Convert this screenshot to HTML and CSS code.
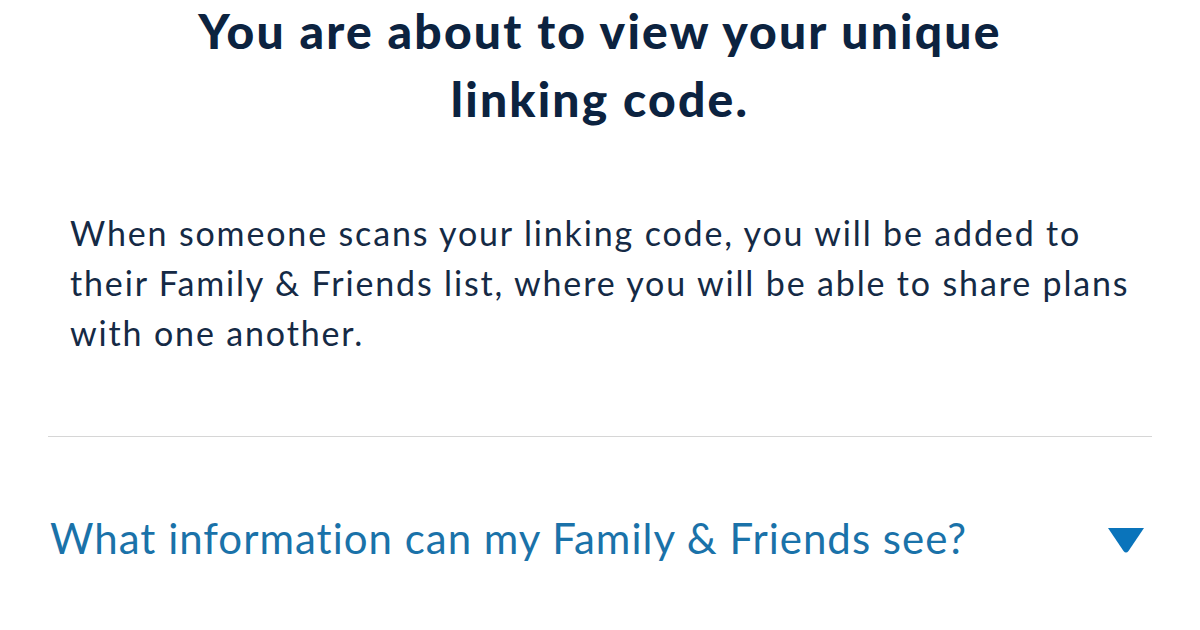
FILE: index.html
```html
<!DOCTYPE html>
<html lang="en">
<head>
<meta charset="utf-8">
<link rel="stylesheet" href="styles.css">
</head>
<body>
<main class="page">
  <h1 class="title">You are about to view your unique<br>linking code.</h1>
  <p class="intro">When someone scans your linking code, you will be added to their Family &amp; Friends list, where you will be able to share plans with one another.</p>
  <hr class="divider">
  <div class="faq">
    <span class="faq-q">What information can my Family &amp; Friends see?</span>
    <svg class="faq-caret" width="36" height="25" viewBox="0 0 36 25"><path d="M0 0 H36 L20.5 23 Q18 26 15.5 23 Z" fill="#0a74bb"/></svg>
  </div>
</main>
</body>
</html>
```
FILE: styles.css
```css
html, body { margin: 0; padding: 0; background: #fff; }
.page {
  width: 1200px;
  height: 630px;
  overflow: hidden;
  padding-top: 1px;
  box-sizing: border-box;
  font-family: Lato, "Noto Sans", sans-serif;
}
.title {
  margin: -4px 0 0 0;
  text-align: center;
  font-size: 48px;
  line-height: 68px;
  font-weight: 900;
  letter-spacing: 2.2px;
  color: #0c2340;
}
.intro {
  margin: 0;
  padding: 75px 50px 0 70px;
  font-size: 34px;
  line-height: 50px;
  letter-spacing: 1.85px;
  color: #152a45;
}
.divider {
  margin: 78px 48px 0 48px;
  border: 0;
  border-top: 1px solid #d6d6d6;
  height: 0;
}
.faq {
  display: flex;
  align-items: flex-start;
  justify-content: space-between;
  padding: 76px 56px 0 50px;
}
.faq-q {
  font-size: 42px;
  line-height: 50px;
  letter-spacing: 1px;
  color: #1a72a9;
}
.faq-caret { display: block; margin-top: 15px; }
```
